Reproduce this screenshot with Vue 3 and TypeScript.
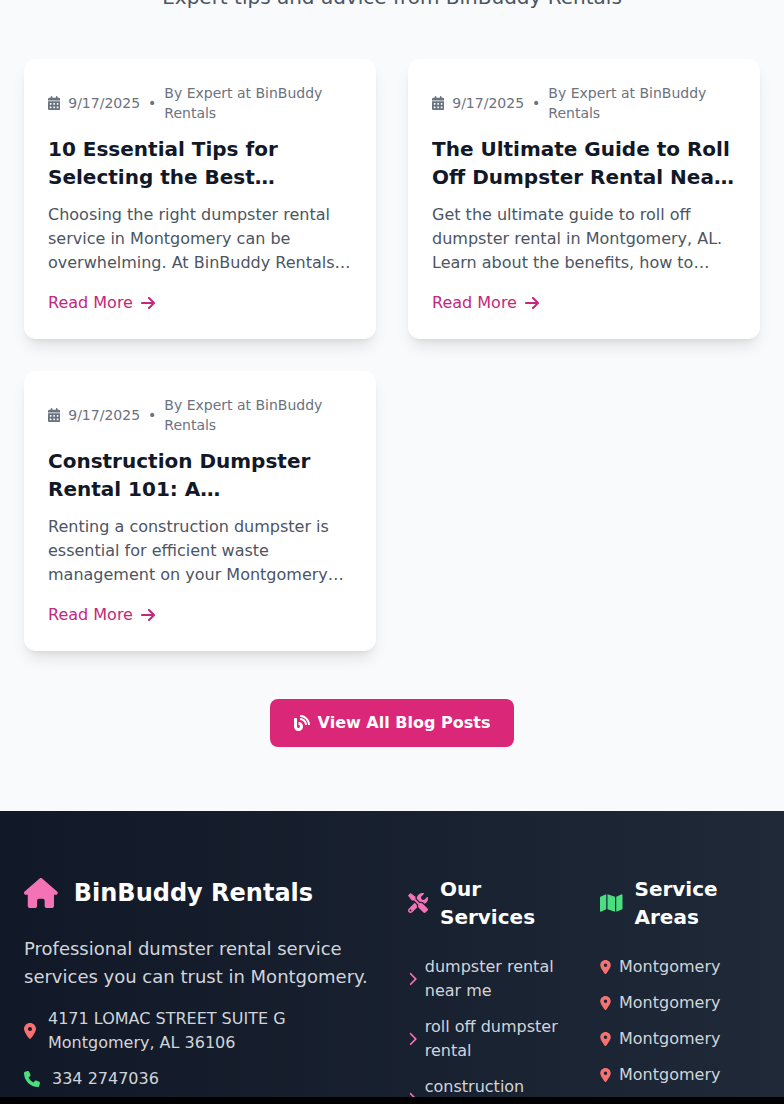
<script setup lang="ts">
interface Post {
  title: string
  excerpt: string
}

const posts: Post[] = [
  {
    title: '10 Essential Tips for Selecting the Best Dumpster Rental Service',
    excerpt:
      'Choosing the right dumpster rental service in Montgomery can be overwhelming. At BinBuddy Rentals, we make the whole process simple for you.',
  },
  {
    title: 'The Ultimate Guide to Roll Off Dumpster Rental Near You',
    excerpt:
      'Get the ultimate guide to roll off dumpster rental in Montgomery, AL. Learn about the benefits, how to choose the right size and more.',
  },
  {
    title: 'Construction Dumpster Rental 101: A Comprehensive Guide',
    excerpt:
      'Renting a construction dumpster is essential for efficient waste management on your Montgomery project, big or small, from start to finish.',
  },
]

const services = ['dumpster rental near me', 'roll off dumpster rental', 'construction dumpster rental']
const areas = ['Montgomery', 'Montgomery', 'Montgomery', 'Montgomery', 'Montgomery']

const pinPath =
  'M215.7 499.2C267 435 384 279.4 384 192C384 86 298 0 192 0S0 86 0 192c0 87.4 117 243 168.3 307.2c12.3 15.3 35.1 15.3 47.4 0zM192 128a64 64 0 1 1 0 128 64 64 0 1 1 0-128z'
</script>

<template>
  <div class="page">
    <section class="blog">
      <p class="subtitle">Expert tips and advice from BinBuddy Rentals</p>
      <div class="grid">
        <article v-for="post in posts" :key="post.title" class="card">
          <div class="meta">
            <svg class="cal" viewBox="0 0 448 512" fill="currentColor">
              <path d="M128 0c17.7 0 32 14.3 32 32V64H288V32c0-17.7 14.3-32 32-32s32 14.3 32 32V64h48c26.5 0 48 21.5 48 48v48H0V112C0 85.5 21.5 64 48 64H96V32c0-17.7 14.3-32 32-32zM0 192H448V464c0 26.5-21.5 48-48 48H48c-26.5 0-48-21.5-48-48V192zm64 80v32c0 8.8 7.2 16 16 16h32c8.8 0 16-7.2 16-16V272c0-8.8-7.2-16-16-16H80c-8.8 0-16 7.2-16 16zm128 0v32c0 8.8 7.2 16 16 16h32c8.8 0 16-7.2 16-16V272c0-8.8-7.2-16-16-16H208c-8.8 0-16 7.2-16 16zm144-16c-8.8 0-16 7.2-16 16v32c0 8.8 7.2 16 16 16h32c8.8 0 16-7.2 16-16V272c0-8.8-7.2-16-16-16H336zM64 400v32c0 8.8 7.2 16 16 16h32c8.8 0 16-7.2 16-16V400c0-8.8-7.2-16-16-16H80c-8.8 0-16 7.2-16 16zm144-16c-8.8 0-16 7.2-16 16v32c0 8.8 7.2 16 16 16h32c8.8 0 16-7.2 16-16V400c0-8.8-7.2-16-16-16H208zm112 16v32c0 8.8 7.2 16 16 16h32c8.8 0 16-7.2 16-16V400c0-8.8-7.2-16-16-16H336c-8.8 0-16 7.2-16 16z" />
            </svg>
            <span class="date">9/17/2025</span>
            <span class="dot">•</span>
            <span>By Expert at BinBuddy Rentals</span>
          </div>
          <h3 class="title">{{ post.title }}</h3>
          <p class="excerpt">{{ post.excerpt }}</p>
          <a class="more">
            Read More
            <svg class="arrow" viewBox="0 0 448 512" fill="currentColor">
              <path d="M438.6 278.6c12.5-12.5 12.5-32.8 0-45.3l-160-160c-12.5-12.5-32.8-12.5-45.3 0s-12.5 32.8 0 45.3L338.8 224 32 224c-17.7 0-32 14.3-32 32s14.3 32 32 32l306.7 0L233.4 393.4c-12.5 12.5-12.5 32.8 0 45.3s32.8 12.5 45.3 0l160-160z" />
            </svg>
          </a>
        </article>
      </div>
      <div class="all">
        <a class="all-btn">
          <svg class="blog-icon" viewBox="0 0 512 512" fill="currentColor">
            <path d="M172.2 226.8c-14.6-2.9-28.2 8.9-28.2 23.8V301c0 10.2 7.1 18.4 16.7 22 18.2 6.8 31.3 24.4 31.3 45 0 26.5-21.5 48-48 48s-48-21.5-48-48V120c0-13.3-10.7-24-24-24H24c-13.3 0-24 10.7-24 24v248c0 89.5 82.1 160.2 175 140.7 54.4-11.4 98.3-55.4 109.7-109.7 17.4-82.9-37-157.2-112.5-172.2zM209 0c-9.2-.5-17 6.8-17 16v31.6c0 8.5 6.6 15.5 15 15.9 129.4 7 233.1 112 240.9 241.5.5 8.4 7.5 15 15.9 15h32.1c9.2 0 16.5-7.8 16-17C503.4 139.8 372.2 8.6 209 0zm.3 96c-9.3-.7-17.3 6.7-17.3 16.1v32.1c0 8.4 6.5 15.3 14.8 15.9 76.8 6.3 138 68.2 144.9 145.2.8 8.3 7.6 14.7 15.9 14.7h32.2c9.3 0 16.8-8 16.1-17.3-8.4-110.1-96.5-198.2-206.6-206.7z" />
          </svg>
          View All Blog Posts
        </a>
      </div>
    </section>

    <footer class="footer">
      <div class="cols">
        <div class="brand">
          <div class="logo">
            <svg class="house" viewBox="0 0 576 512" fill="currentColor">
              <path d="M575.8 255.5c0 18-15 32.1-32 32.1h-32l.7 160.2c0 2.7-.2 5.4-.5 8.1V472c0 22.1-17.9 40-40 40H456c-1.1 0-2.2 0-3.3-.1c-1.4 .1-2.8 .1-4.2 .1H416 392c-22.1 0-40-17.9-40-40V448 384c0-17.7-14.3-32-32-32H256c-17.7 0-32 14.3-32 32v64 24c0 22.1-17.9 40-40 40H160 128.1c-1.5 0-3-.1-4.5-.2c-1.2 .1-2.4 .2-3.6 .2H104c-22.1 0-40-17.9-40-40V360c0-.9 0-1.9 .1-2.8V287.6H32c-18 0-32-14-32-32.1c0-9 3-17 10-24L266.4 8c7-7 15-8 22-8s15 2 21 7L564.8 231.5c8 7 12 15 11 24z" />
            </svg>
            <span>BinBuddy Rentals</span>
          </div>
          <p class="about">Professional dumster rental service services you can trust in Montgomery.</p>
          <div class="contact">
            <svg class="pin-addr" viewBox="0 0 384 512" fill="currentColor"><path :d="pinPath" /></svg>
            <span>4171 LOMAC STREET SUITE G<br />Montgomery, AL 36106</span>
          </div>
          <div class="contact">
            <svg class="phone" viewBox="0 0 512 512" fill="currentColor">
              <path d="M164.9 24.6c-7.7-18.6-28-28.5-47.4-23.2l-88 24C12.1 30.2 0 46 0 64C0 311.4 200.6 512 448 512c18 0 33.8-12.1 38.6-29.5l24-88c5.3-19.4-4.6-39.7-23.2-47.4l-96-40c-16.3-6.8-35.2-2.1-46.3 11.6L304.7 368C234.3 334.7 177.3 277.7 144 207.3L193.3 167c13.7-11.2 18.4-30 11.6-46.3l-40-96z" />
            </svg>
            <span>334 2747036</span>
          </div>
        </div>

        <div>
          <h4 class="heading">
            <svg class="tools" viewBox="0 0 512 512" fill="currentColor">
              <path d="M501.1 395.7L384 278.6c-23.1-23.1-57.6-27.6-85.4-13.9L192 158.1V96L64 0 0 64l96 128h62.1l106.6 106.6c-13.6 27.8-9.2 62.3 13.9 85.4l117.1 117.1c14.6 14.6 38.2 14.6 52.7 0l52.7-52.7c14.5-14.6 14.5-38.2 0-52.7zM331.7 225c28.3 0 54.9 11 74.9 31l19.4 19.4c15.8-6.9 30.8-16.5 43.8-29.5 37.1-37.1 49.7-89.3 37.9-136.7-2.2-9-13.5-12.1-20.1-5.5l-74.4 74.4-67.9-11.3L334 98.9l74.4-74.4c6.6-6.6 3.4-17.9-5.7-20.2-47.4-11.7-99.6.9-136.6 37.9-28.5 28.5-41.9 66.1-41.2 103.6l82.1 82.1c8.1-1.9 16.5-2.9 24.7-2.9zm-103.9 82l-56.7-56.7L18.7 402.8c-25 25-25 65.5 0 90.5s65.5 25 90.5 0l123.6-123.6c-7.6-19.9-9.9-41.6-5-62.7zM64 472c-13.2 0-24-10.8-24-24 0-13.3 10.7-24 24-24s24 10.7 24 24c0 13.2-10.7 24-24 24z" />
            </svg>
            <span>Our Services</span>
          </h4>
          <ul class="list">
            <li v-for="item in services" :key="item" class="service">
              <svg class="chevron" viewBox="0 0 320 512" fill="currentColor">
                <path d="M310.6 233.4c12.5 12.5 12.5 32.8 0 45.3l-192 192c-12.5 12.5-32.8 12.5-45.3 0s-12.5-32.8 0-45.3L242.7 256 73.4 86.6c-12.5-12.5-12.5-32.8 0-45.3s32.8-12.5 45.3 0l192 192z" />
              </svg>
              <span>{{ item }}</span>
            </li>
          </ul>
        </div>

        <div>
          <h4 class="heading">
            <svg class="map" viewBox="0 0 576 512" fill="currentColor">
              <path d="M0 117.66v346.32c0 11.32 11.43 19.06 21.94 14.86L160 416V32L20.12 87.95A32.006 32.006 0 0 0 0 117.66zM192 416l192 64V96L192 32v384zM554.06 33.16L416 96v384l139.88-55.95A31.996 31.996 0 0 0 576 394.34V48.02c0-11.32-11.43-19.06-21.94-14.86z" />
            </svg>
            <span>Service Areas</span>
          </h4>
          <ul class="list">
            <li v-for="(area, i) in areas" :key="i" class="area">
              <svg class="pin" viewBox="0 0 384 512" fill="currentColor"><path :d="pinPath" /></svg>
              <span>{{ area }}</span>
            </li>
          </ul>
        </div>
      </div>
    </footer>

    <div class="bottom-bar"></div>
  </div>
</template>

<style>
html,
body {
  margin: 0;
  overflow: hidden;
  background: #f9fafb;
}
</style>

<style scoped>
.page {
  height: 1104px;
  overflow: hidden;
  font-family: 'DejaVu Sans', sans-serif;
  background: #f9fafb;
  color: #111827;
}

.blog {
  margin-top: -17px;
  padding: 0 24px 64px;
}

.subtitle {
  margin: 0 0 48px;
  font-size: 20px;
  line-height: 28px;
  color: #4b5563;
  text-align: center;
}

.grid {
  display: grid;
  grid-template-columns: 1fr 1fr;
  gap: 32px;
}

.card {
  padding: 24px;
  background: #fff;
  border-radius: 12px;
  box-shadow: 0 10px 15px -3px rgba(0, 0, 0, 0.1), 0 4px 6px -4px rgba(0, 0, 0, 0.1);
}

.meta {
  display: flex;
  align-items: center;
  margin-bottom: 12px;
  font-size: 14px;
  line-height: 20px;
  color: #6b7280;
}

.cal {
  flex: none;
  width: 12.25px;
  height: 14px;
  margin-right: 8px;
}

.date {
  flex: none;
}

.dot {
  flex: none;
  margin: 0 8px;
}

.title {
  display: -webkit-box;
  -webkit-box-orient: vertical;
  -webkit-line-clamp: 2;
  overflow: hidden;
  margin: 0 0 12px;
  font-size: 20px;
  line-height: 28px;
  font-weight: 700;
  color: #111827;
}

.excerpt {
  display: -webkit-box;
  -webkit-box-orient: vertical;
  -webkit-line-clamp: 3;
  overflow: hidden;
  margin: 0 0 16px;
  font-size: 16px;
  line-height: 24px;
  color: #4b5563;
}

.more {
  display: inline-flex;
  align-items: center;
  gap: 8px;
  font-size: 16px;
  line-height: 24px;
  color: #c4287a;
}

.arrow {
  width: 14px;
  height: 16px;
}

.all {
  display: flex;
  justify-content: center;
  margin-top: 48px;
}

.all-btn {
  display: inline-flex;
  align-items: center;
  gap: 8px;
  padding: 12px 24px;
  background: #db2777;
  border-radius: 8px;
  color: #fff;
  font-size: 16px;
  line-height: 24px;
  font-weight: 700;
}

.blog-icon {
  width: 16px;
  height: 16px;
}

.footer {
  padding: 64px 24px;
  background: linear-gradient(to right, #111827, #1f2937);
  color: #d1d5db;
}

.cols {
  display: grid;
  grid-template-columns: repeat(4, 1fr);
  gap: 32px;
}

.brand {
  grid-column: span 2;
}

.logo {
  display: flex;
  align-items: center;
  gap: 16px;
  height: 36px;
  margin-bottom: 24px;
  font-size: 24px;
  line-height: 32px;
  font-weight: 700;
  color: #fff;
}

.house {
  width: 33.75px;
  height: 30px;
  color: #f472b6;
}

.about {
  margin: 0 0 16px;
  font-size: 18px;
  line-height: 28px;
}

.contact {
  display: flex;
  align-items: center;
  gap: 12px;
  margin-bottom: 12px;
  font-size: 16px;
  line-height: 24px;
}

.pin-addr {
  flex: none;
  width: 12px;
  height: 16px;
  color: #f87171;
}

.phone {
  flex: none;
  width: 16px;
  height: 16px;
  color: #4ade80;
}

.heading {
  display: flex;
  align-items: center;
  gap: 12px;
  margin: 0 0 24px;
  font-size: 20px;
  line-height: 28px;
  font-weight: 700;
  color: #fff;
}

.tools {
  flex: none;
  width: 20px;
  height: 20px;
  color: #f472b6;
}

.map {
  flex: none;
  width: 22.5px;
  height: 20px;
  color: #4ade80;
}

.list {
  display: flex;
  flex-direction: column;
  gap: 12px;
  margin: 0;
  padding: 0;
  list-style: none;
  font-size: 16px;
  line-height: 24px;
}

.service,
.area {
  display: flex;
  align-items: center;
  gap: 8px;
}

.chevron {
  flex: none;
  width: 8.75px;
  height: 14px;
  color: #f472b6;
}

.pin {
  flex: none;
  width: 11px;
  height: 14px;
  color: #f87171;
}

.bottom-bar {
  position: fixed;
  left: 0;
  right: 0;
  bottom: 0;
  height: 7px;
  background: #000;
}
</style>
